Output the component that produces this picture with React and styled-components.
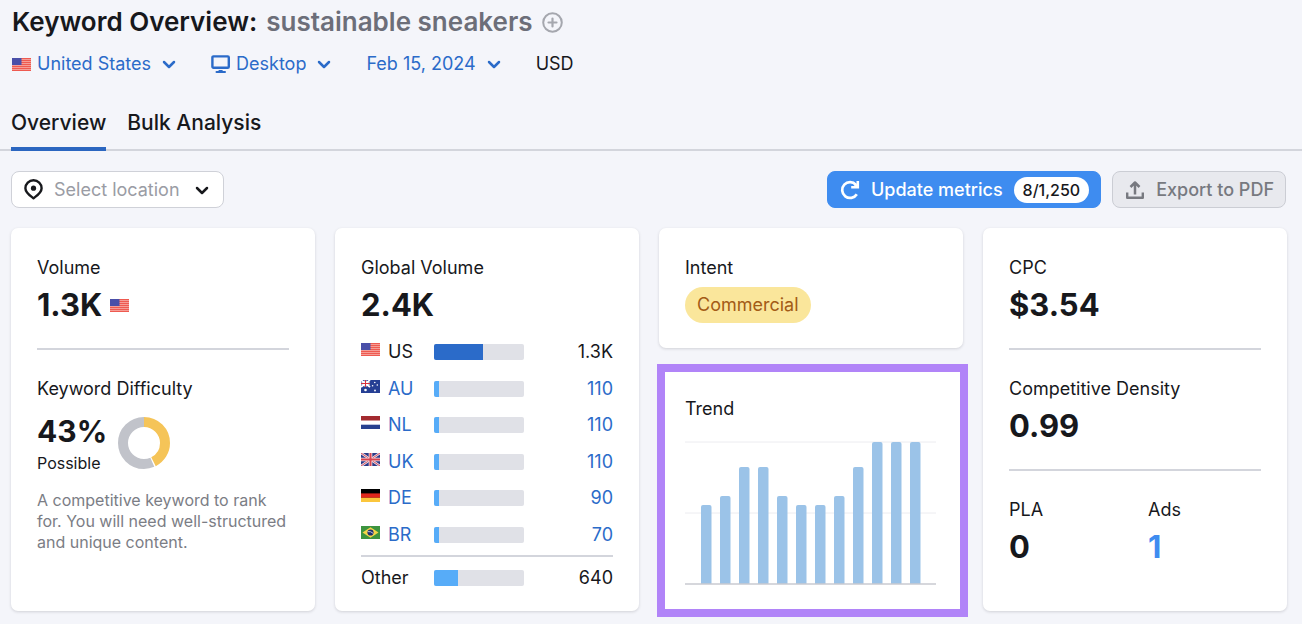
import React from 'react';
import styled, { createGlobalStyle } from 'styled-components';

const countries = [
  { code: 'US', value: '1.3K', share: 54, current: true },
  { code: 'AU', value: '110', share: 5 },
  { code: 'NL', value: '110', share: 5 },
  { code: 'UK', value: '110', share: 5 },
  { code: 'DE', value: '90', share: 5 },
  { code: 'BR', value: '70', share: 5 },
];

const trend = [79, 88, 117, 117, 88, 79, 79, 88, 117, 142, 142, 142];

const flags = {
  US: (
    <>
      <rect width="19" height="13" fill="#f7b5ae" />
      <path d="M0 .7h19M0 2.7h19M0 4.7h19M0 6.7h19M0 8.7h19M0 10.7h19M0 12.5h19" stroke="#ee5a50" strokeWidth="1.2" />
      <rect width="9.500" height="7" fill="#4a4fa8" />
    </>
  ),
  AU: (
    <>
      <rect width="19" height="13" fill="#253f94" />
      <path d="M0 0l9 7M9 0L0 7M4.5 0v7M0 3.5h9" stroke="#fff" strokeWidth="1.8" />
      <path d="M4.5 0v7M0 3.5h9" stroke="#d8323e" strokeWidth="1" />
      <circle cx="4.5" cy="10" r="1.3" fill="#fff" />
      <circle cx="13.8" cy="2.5" r=".8" fill="#fff" />
      <circle cx="11.6" cy="5.8" r=".8" fill="#fff" />
      <circle cx="16.3" cy="5" r=".8" fill="#fff" />
      <circle cx="14" cy="10.5" r=".9" fill="#fff" />
    </>
  ),
  NL: (
    <>
      <rect width="19" height="13" fill="#fff" />
      <rect width="19" height="4.5" fill="#a32a2f" />
      <rect y="8.7" width="19" height="4.3" fill="#27408f" />
    </>
  ),
  UK: (
    <>
      <rect width="19" height="13" fill="#2c3a87" />
      <path d="M0 0l19 13M19 0L0 13" stroke="#e9dfea" strokeWidth="2.4" />
      <path d="M0 0l19 13M19 0L0 13" stroke="#d8434f" strokeWidth=".9" />
      <path d="M9.5 0v13M0 6.5h19" stroke="#f3e6ea" strokeWidth="3.6" />
      <path d="M9.5 0v13M0 6.5h19" stroke="#d8434f" strokeWidth="2" />
    </>
  ),
  DE: (
    <>
      <rect width="19" height="13" fill="#000" />
      <rect y="4.4" width="19" height="4.4" fill="#e0261c" />
      <rect y="8.8" width="19" height="4.2" fill="#fbc63c" />
    </>
  ),
  BR: (
    <>
      <rect width="19" height="13" fill="#3d943f" />
      <path d="M9.5 1.2L17.5 6.5 9.5 11.8 1.5 6.5z" fill="#f5d548" />
      <circle cx="9.5" cy="6.5" r="3.1" fill="#20306f" />
      <path d="M6.8 5.6q3-.6 5.4 1.8" fill="none" stroke="#fff" strokeWidth=".7" />
    </>
  ),
};

const Flag = ({ code }) => (
  <FlagSvg viewBox="0 0 19 13" aria-hidden="true">
    {flags[code]}
  </FlagSvg>
);

const Chevron = () => (
  <Icon width="14" height="10" viewBox="0 0 14 10">
    <path d="M2 3l5 5 5-5" strokeWidth="2.5" />
  </Icon>
);

const MonitorIcon = () => (
  <Icon width="19" height="19" viewBox="0 0 19 19">
    <rect x="1.4" y="1.4" width="16.4" height="11.4" rx="1" strokeWidth="2.4" />
    <path d="M5.500 17h8.500" strokeWidth="2" />
    <path d="M9.6 15v2" strokeWidth="4" strokeLinecap="butt" />
  </Icon>
);

const PlusIcon = () => (
  <Icon width="21" height="21" viewBox="0 0 21 21">
    <circle cx="10.5" cy="10.5" r="9.3" strokeWidth="2" />
    <path d="M10.5 6.5v8M6.5 10.5h8" strokeWidth="2.2" />
  </Icon>
);

const PinIcon = () => (
  <Icon width="19" height="21" viewBox="0 0 19 21">
    <path d="M9.5 19.2C6 16.5 1.4 13.8 1.4 9.2a8.1 8 0 0 1 16.2 0c0 4.6-4.6 7.3-8.1 10z" strokeWidth="2.4" />
    <circle cx="9.5" cy="9.2" r="2.6" fill="currentColor" stroke="none" />
  </Icon>
);

const RefreshIcon = () => (
  <Icon width="20" height="20" viewBox="0 0 20 20">
    <path d="M16.8 14.2A7.9 7.9 0 1 1 16 4.8" strokeWidth="2.7" strokeLinecap="butt" />
    <path d="M17.8 1v6.2h-6.600" strokeWidth="2.6" strokeLinecap="butt" strokeLinejoin="miter" />
    <path d="M14.500 3.800l2.500 2.500" strokeWidth="2.6" strokeLinecap="butt" />
  </Icon>
);

const UploadIcon = () => (
  <Icon width="20" height="20" viewBox="0 0 20 20">
    <path d="M2.200 12.500v5.300h15.600v-5.300" strokeWidth="2.4" strokeLinecap="butt" />
    <path d="M10 14.500V3M5.500 7L10 2.500 14.500 7" strokeWidth="2.5" strokeLinecap="butt" />
  </Icon>
);

const Metric = ({ label, children }) => (
  <div>
    <Label>{label}</Label>
    <Value>{children}</Value>
  </div>
);

const TrendChart = () => (
  <Chart viewBox="0 0 252 144" role="img" aria-label="Search volume trend over 12 months">
    <path d="M0 1h251M0 72h251" stroke="#ececf0" strokeWidth="1" />
    {trend.map((height, index) => (
      <path
        key={index}
        d={`M${16 + index * 19} 143v-${height - 2}q0-2 2-2h6.5q2 0 2 2v${height - 2}z`}
        fill="#9bc3e8"
      />
    ))}
    <path d="M0 143h251" stroke="#c9cad0" strokeWidth="1.5" />
  </Chart>
);

const App = () => {
  return (
    <Page>
      <GlobalStyle />
      <Header>
        <Title>
          Keyword Overview: <Keyword>sustainable sneakers</Keyword>
          <AddButton type="button" aria-label="Add keyword">
            <PlusIcon />
          </AddButton>
        </Title>
        <Filters>
          <Filter>
            <Flag code="US" />
            <FilterSelect aria-label="Country">
              <option>United States</option>
            </FilterSelect>
            <Chevron />
          </Filter>
          <Filter>
            <MonitorIcon />
            <FilterSelect aria-label="Device">
              <option>Desktop</option>
              <option>Mobile</option>
            </FilterSelect>
            <Chevron />
          </Filter>
          <Filter>
            <FilterSelect aria-label="Date">
              <option>Feb 15, 2024</option>
            </FilterSelect>
            <Chevron />
          </Filter>
          <span>USD</span>
        </Filters>
      </Header>
      <Tabs>
        <Tab href="#overview" $active>Overview</Tab>
        <Tab href="#bulk">Bulk Analysis</Tab>
      </Tabs>
      <Toolbar>
        <LocationField>
          <PinIcon />
          <LocationSelect aria-label="Location">
            <option>Select location</option>
          </LocationSelect>
          <Chevron />
        </LocationField>
        <Actions>
          <Button type="button" $primary>
            <RefreshIcon />
            Update metrics
            <Counter>8/1,250</Counter>
          </Button>
          <Button type="button">
            <UploadIcon />
            Export to PDF
          </Button>
        </Actions>
      </Toolbar>
      <Cards>
        <Card>
          <Metric label="Volume">
            1.3K <Flag code="US" />
          </Metric>
          <Divider />
          <Label>Keyword Difficulty</Label>
          <Difficulty>
            <div>
              <Percent>43%</Percent>
              <Level>Possible</Level>
            </div>
            <Donut viewBox="0 0 52 52" aria-hidden="true">
              <circle cx="26" cy="26" r="21" pathLength="100" stroke="#f5c458" strokeDasharray="42.5 57.5" />
              <circle cx="26" cy="26" r="21" pathLength="100" stroke="#c1c3ca" strokeDasharray="56.5 43.5" strokeDashoffset="-43.5" />
            </Donut>
          </Difficulty>
          <Description>
            A competitive keyword to rank for. You will need well-structured and unique content.
          </Description>
        </Card>
        <Card>
          <Metric label="Global Volume">2.4K</Metric>
          <Table>
            <tbody>
              {countries.map((country) => (
                <CountryRow key={country.code} $current={country.current}>
                  <th scope="row">
                    <Country>
                      <Flag code={country.code} />
                      {country.current ? country.code : <a href={`#${country.code}`}>{country.code}</a>}
                    </Country>
                  </th>
                  <td>
                    <Track>
                      <Fill $current={country.current} style={{ width: `${country.share}%` }} />
                    </Track>
                  </td>
                  <td>{country.current ? country.value : <a href={`#${country.code}`}>{country.value}</a>}</td>
                </CountryRow>
              ))}
            </tbody>
            <tfoot>
              <OtherRow>
                <th scope="row">Other</th>
                <td>
                  <Track>
                    <Fill style={{ width: '27%' }} />
                  </Track>
                </td>
                <td>640</td>
              </OtherRow>
            </tfoot>
          </Table>
        </Card>
        <Column>
          <Card>
            <Metric label="Intent">
              <Badge>Commercial</Badge>
            </Metric>
          </Card>
          <HighlightedCard>
            <Label>Trend</Label>
            <TrendChart />
          </HighlightedCard>
        </Column>
        <Card>
          <Metric label="CPC">$3.54</Metric>
          <Divider />
          <Metric label="Competitive Density">0.99</Metric>
          <Divider />
          <Pair>
            <Metric label="PLA">0</Metric>
            <Metric label="Ads">
              <a href="#ads">1</a>
            </Metric>
          </Pair>
        </Card>
      </Cards>
    </Page>
  );
};

const GlobalStyle = createGlobalStyle`
  * {
    box-sizing: border-box;
  }

  body {
    margin: 0;
    background: #f4f5fa;
    color: #17181c;
    font-family: Inter, 'Liberation Sans', sans-serif;
    font-size: 18px;
    line-height: 24px;
  }

  button,
  select {
    font: inherit;
    color: inherit;
  }

  a {
    color: inherit;
    text-decoration: none;
  }
`;

const Page = styled.main`
  padding-bottom: 12px;
`;

const Header = styled.header`
  padding: 6px 16px 0 12px;
`;

const Title = styled.h1`
  display: flex;
  align-items: center;
  gap: 9px;
  margin: 0;
  font-size: 26px;
  font-weight: 600;
  line-height: 32px;
`;

const Keyword = styled.span`
  color: #6c6e79;
`;

const AddButton = styled.button`
  display: flex;
  padding: 0;
  border: 0;
  background: none;
  color: #a5a7ae;
`;

const Icon = styled.svg`
  flex: none;
  fill: none;
  stroke: currentColor;
  stroke-linecap: round;
  stroke-linejoin: round;
`;

const FlagSvg = styled.svg`
  flex: none;
  width: 19px;
  height: 13px;
`;

const Filters = styled.div`
  display: flex;
  align-items: center;
  gap: 35px;
  margin-top: 14px;
`;

const Filter = styled.div`
  display: flex;
  align-items: center;
  gap: 6px;
  color: #2b6bc9;
`;

const BareSelect = styled.select`
  appearance: none;
  field-sizing: content;
  padding: 0;
  border: 0;
  background: none;
  outline: none;
`;

const FilterSelect = styled(BareSelect)`
  margin-right: 5px;
`;

const Tabs = styled.nav`
  display: flex;
  gap: 21px;
  margin-top: 35px;
  padding-left: 11px;
  box-shadow: inset 0 -2px #d3d5dc;
`;

const Tab = styled.a`
  padding-bottom: 12px;
  border-bottom: 4px solid ${({ $active }) => ($active ? '#2b66c0' : 'transparent')};
  font-size: 21px;
  font-weight: 500;
`;

const Toolbar = styled.div`
  display: flex;
  justify-content: space-between;
  padding: 20px 16px 20px 11px;
`;

const LocationField = styled.div`
  display: flex;
  align-items: center;
  height: 37px;
  padding: 0 14px 0 12px;
  border: 1px solid #cfd1d8;
  border-radius: 8px;
  background: #fff;
`;

const LocationSelect = styled(BareSelect)`
  margin: 0 15px 0 11px;
  color: #9a9ca4;
`;

const Actions = styled.div`
  display: flex;
  gap: 11px;
`;

const Button = styled.button`
  display: flex;
  align-items: center;
  gap: 11px;
  height: 37px;
  padding: 0 11px 0 12px;
  border: 1px solid ${({ $primary }) => ($primary ? '#3e8cf0' : '#cbcdd4')};
  border-radius: 8px;
  background: ${({ $primary }) => ($primary ? '#3e8cf0' : '#e8e9ee')};
  color: ${({ $primary }) => ($primary ? '#fff' : '#777980')};
  font-weight: 500;
`;

const Counter = styled.span`
  padding: 1px 9px;
  border-radius: 13px;
  background: #fff;
  color: #17181c;
  font-size: 16px;
`;

const Cards = styled.div`
  display: grid;
  grid-template-columns: repeat(4, 1fr);
  gap: 20px;
  padding: 0 15px 0 11px;
`;

const Column = styled.div`
  display: grid;
  grid-template-rows: auto 1fr;
  gap: 21px;
`;

const Card = styled.section`
  padding: 28px 26px 23px;
  border-radius: 7px;
  background: #fff;
  box-shadow: 0 1px 3px rgba(25, 27, 35, 0.16);
`;

const HighlightedCard = styled(Card)`
  position: relative;

  &::after {
    content: '';
    position: absolute;
    inset: -5px -5px -6px -2px;
    border: 8px solid #b184f8;
    pointer-events: none;
  }
`;

const Label = styled.div`
  font-size: 18px;
`;

const Value = styled.div`
  display: flex;
  align-items: center;
  gap: 8px;
  height: 40px;
  margin-top: 5px;
  font-size: 31px;
  font-weight: 700;

  a {
    color: #3e8cf0;
  }
`;

const Divider = styled.hr`
  height: 2px;
  margin: 23px 0 27px;
  border: 0;
  background: #d3d5dc;
`;

const Difficulty = styled.div`
  display: flex;
  align-items: center;
  gap: 11px;
  margin-top: 10px;
`;

const Percent = styled.div`
  font-size: 30px;
  font-weight: 700;
  line-height: 40px;
`;

const Level = styled.div`
  font-size: 16px;
`;

const Donut = styled.svg`
  width: 52px;
  height: 52px;
  fill: none;
  stroke-width: 10px;
  transform: rotate(-90deg);
`;

const Description = styled.p`
  margin: 15px 0 0;
  color: #7b7d85;
  font-size: 16px;
  line-height: 21px;
`;

const Table = styled.table`
  width: 100%;
  margin-top: 9px;
  border-spacing: 0;

  th,
  td {
    padding: 0;
    font-weight: 400;
    text-align: left;
  }

  th {
    width: 73px;
  }

  td:last-child {
    text-align: right;
  }
`;

const CountryRow = styled.tr`
  height: 36px;
  color: ${({ $current }) => ($current ? '#17181c' : '#2b6bc9')};

  &:nth-child(even) {
    height: 37px;
  }

  &:last-child {
    height: 39px;
  }

  &:last-child > * {
    padding-bottom: 2px;
  }
`;

const Country = styled.div`
  display: flex;
  align-items: center;
  gap: 8px;

  svg {
    margin-bottom: 5px;
  }
`;

const Track = styled.div`
  width: 90px;
  height: 16px;
  border-radius: 2px;
  background: #e0e1e7;
  overflow: hidden;
`;

const Fill = styled.div`
  height: 100%;
  background: ${({ $current }) => ($current ? '#2b6bc9' : '#57acf8')};
`;

const OtherRow = styled.tr`
  th,
  td {
    padding-top: 11px;
    border-top: 2px solid #d3d5dc;
    line-height: 20px;
  }
`;

const Badge = styled.span`
  padding: 6px 12px;
  border-radius: 18px;
  background: #fae69b;
  color: #a35b16;
  font-size: 18px;
  font-weight: 400;
`;

const Chart = styled.svg`
  display: block;
  width: 100%;
  margin-top: 20px;
`;

const Pair = styled.div`
  display: grid;
  grid-template-columns: 139px 1fr;
`;

export default App;
